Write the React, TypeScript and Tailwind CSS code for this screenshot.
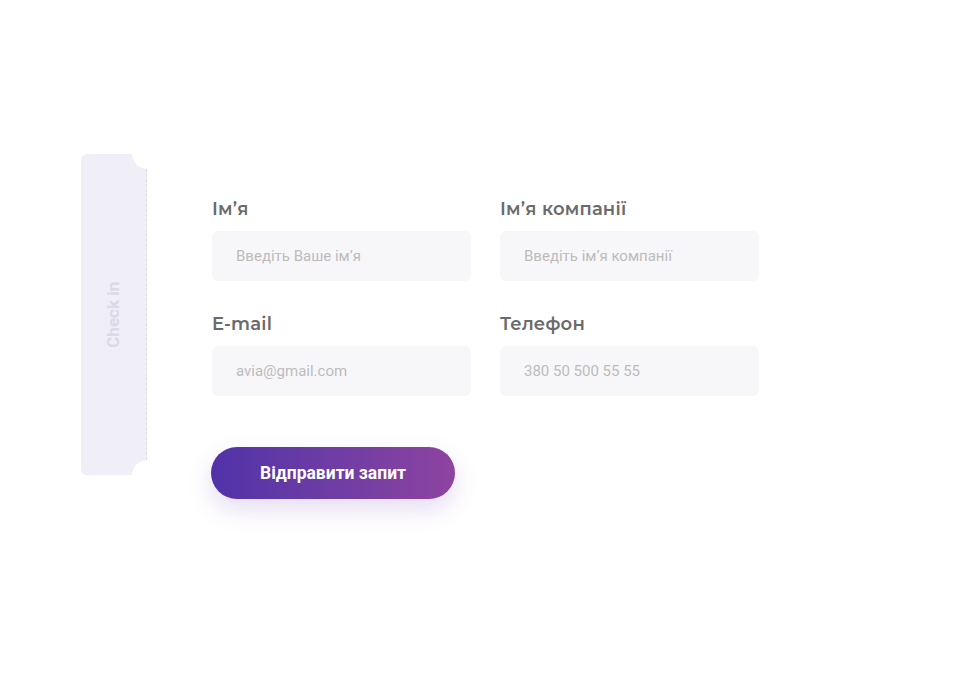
import React from "react";

const labelCls =
  "block text-[18px] leading-[22px] font-semibold text-[#6a6a6a] tracking-[0.2px]";
const inputCls =
  "mt-[11px] block h-[50px] w-[259px] rounded-[6px] bg-[#f7f7f9] pl-6 text-[15px] text-[#555] placeholder:text-[#bcbcbc] outline-none";

function Field({ label, placeholder }: { label: string; placeholder: string }) {
  return (
    <div>
      <label className={labelCls} style={{ fontFamily: "Montserrat, 'Open Sans', sans-serif" }}>
        {label}
      </label>
      <input
        className={inputCls}
        placeholder={placeholder}
        style={{ fontFamily: "Roboto, 'Liberation Sans', sans-serif" }}
      />
    </div>
  );
}

export default function App() {
  return (
    <div className="min-h-[681px] w-full bg-white">
      <div className="flex pl-[81px] pt-[154px]">
        <div className="relative h-[321px] w-[66px] overflow-hidden rounded-l-[6px] bg-[#f0eef6]">
          <div className="absolute right-0 top-[15px] bottom-[15px] w-0 border-r border-dashed border-[#e0dcea]" />
          <div className="absolute -right-[16px] -top-[16px] h-[31px] w-[31px] rounded-full bg-white" />
          <div className="absolute -right-[16px] -bottom-[16px] h-[31px] w-[31px] rounded-full bg-white" />
          <div className="flex h-full w-full items-center justify-center">
            <span
              className="-rotate-90 whitespace-nowrap text-[17px] font-bold text-[#dcd9e6]"
              style={{ fontFamily: "Roboto, 'Liberation Sans', sans-serif" }}
            >
              Check in
            </span>
          </div>
        </div>
        <div className="ml-[65px] pt-[44px]">
          <div className="grid grid-cols-[259px_259px] gap-x-[29px] gap-y-[32px]">
            <Field label="Ім’я" placeholder="Введіть Ваше ім’я" />
            <Field label="Ім’я компанії" placeholder="Введіть ім’я компанії" />
            <Field label="E-mail" placeholder="avia@gmail.com" />
            <Field label="Телефон" placeholder="380 50 500 55 55" />
          </div>
          <button
            className="mt-[51px] h-[52px] w-[244px] -ml-px rounded-full bg-gradient-to-r from-[#5032a8] to-[#8e43a0] text-[17.5px] font-bold text-white shadow-[0_10px_25px_rgba(110,60,170,0.18)]"
            style={{ fontFamily: "Roboto, 'Liberation Sans', sans-serif" }}
          >
            Відправити запит
          </button>
        </div>
      </div>
    </div>
  );
}
